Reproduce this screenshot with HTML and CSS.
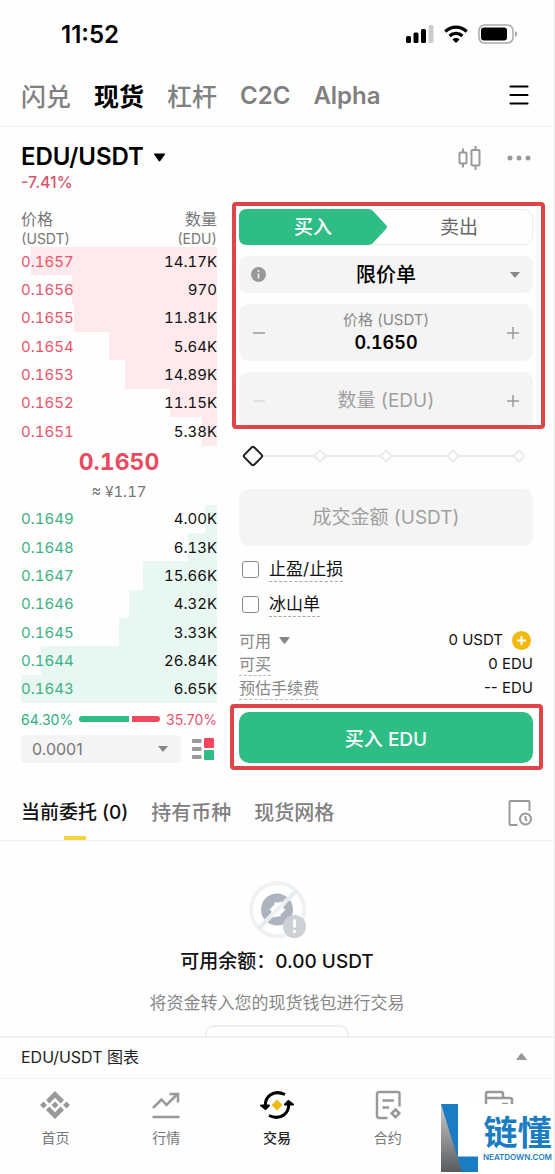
FILE: index.html
```html
<!DOCTYPE html>
<html lang="zh-CN">
<head>
<meta charset="utf-8">
<meta name="viewport" content="width=device-width, initial-scale=1">
<title>EDU/USDT 现货</title>
<link rel="stylesheet" href="styles.css">
</head>
<body>
<div class="app">
  <div class="status">
    <span class="clock">11:52</span>
    <div class="status-icons">
      <svg width="28" height="18" viewBox="0 0 28 18"><rect x="0" y="11" width="5" height="7" rx="1.5"/><rect x="7.500" y="7.500" width="5" height="10.500" rx="1.500"/><rect x="15" y="4" width="5" height="14" rx="1.500"/><rect x="22.500" y="0" width="5" height="18" rx="1.500" fill="#ccc"/></svg>
      <svg width="24" height="18" viewBox="0 0 24 18" fill="none" stroke="#000" stroke-width="3.200"><path d="M1.300 6.500a15.500 15.500 0 0 1 21.400 0"/><path d="M5.600 11a9.300 9.300 0 0 1 12.800 0"/><path d="M12 18l-3.500-3.600a5 5 0 0 1 7 0z" fill="#000" stroke="none"/></svg>
      <svg width="40" height="20" viewBox="0 0 40 20"><rect x="1" y="1" width="34" height="18" rx="5.500" fill="#fff" stroke="#aaa" stroke-width="1.500"/><rect x="3" y="3.500" width="26" height="13" rx="3"/><path d="M37 7c3 1 3 5 0 6z" fill="#aaa"/></svg>
    </div>
  </div>

  <nav class="markets">
    <a href="#">闪兑</a><a href="#" class="on">现货</a><a href="#">杠杆</a><a href="#">C2C</a><a href="#">Alpha</a>
    <button class="icon-btn" aria-label="菜单"><svg width="20" height="20" viewBox="0 0 20 20" stroke="#000" stroke-width="2.200" stroke-linecap="round"><path d="M1.500 1.500h17M1.500 10h17M1.500 18.500h17"/></svg></button>
  </nav>

  <header class="pair">
    <div>
      <button class="pair-name">EDU/USDT <svg width="13" height="9" viewBox="0 0 13 9"><path d="M1.500.5h10q1 0 .4.900L7.300 8q-.8.900-1.600 0L1.100 1.400q-.6-.9.400-.9z"/></svg></button>
      <div class="change">-7.41%</div>
    </div>
    <div class="pair-tools">
      <button class="icon-btn" aria-label="K线"><svg width="23" height="24" viewBox="0 0 23 24" fill="none" stroke="#999" stroke-width="2"><rect x="1.500" y="6.500" width="7" height="11" rx="1"/><path d="M5 2.500v4M5 17.500v4"/><rect x="13.500" y="4" width="8" height="15.500" rx="1"/><path d="M17.500 0v4M17.500 19.500V24"/></svg></button>
      <button class="icon-btn" aria-label="更多"><svg width="24" height="24" viewBox="0 0 24 24" fill="#999"><circle cx="3" cy="12" r="2.500"/><circle cx="12" cy="12" r="2.500"/><circle cx="21" cy="12" r="2.500"/></svg></button>
    </div>
  </header>

  <main class="trade">
    <section class="book-col">
      <table class="book">
        <thead><tr><th>价格<small>(USDT)</small></th><th>数量<small>(EDU)</small></th></tr></thead>
        <tbody class="asks">
          <tr style="--depth:95%"><td>0.1657</td><td>14.17K</td></tr>
          <tr style="--depth:74%"><td>0.1656</td><td>970</td></tr>
          <tr style="--depth:73%"><td>0.1655</td><td>11.81K</td></tr>
          <tr style="--depth:55%"><td>0.1654</td><td>5.64K</td></tr>
          <tr style="--depth:47%"><td>0.1653</td><td>14.89K</td></tr>
          <tr style="--depth:24%"><td>0.1652</td><td>11.15K</td></tr>
          <tr style="--depth:7.500%"><td>0.1651</td><td>5.38K</td></tr>
        </tbody>
        <tbody class="last"><tr><td colspan="2"><strong>0.1650</strong><span>≈ ¥1.17</span></td></tr></tbody>
        <tbody class="bids">
          <tr style="--depth:6%"><td>0.1649</td><td>4.00K</td></tr>
          <tr style="--depth:15%"><td>0.1648</td><td>6.13K</td></tr>
          <tr style="--depth:38%"><td>0.1647</td><td>15.66K</td></tr>
          <tr style="--depth:45%"><td>0.1646</td><td>4.32K</td></tr>
          <tr style="--depth:50%"><td>0.1645</td><td>3.33K</td></tr>
          <tr style="--depth:90%"><td>0.1644</td><td>26.84K</td></tr>
          <tr style="--depth:100%"><td>0.1643</td><td>6.65K</td></tr>
        </tbody>
      </table>
      <div class="ratio"><span class="up">64.30%</span><i class="bar bar-up" style="flex-grow:64"></i><i class="bar bar-down" style="flex-grow:36"></i><span class="down">35.70%</span></div>
      <div class="book-foot">
        <select class="step" aria-label="价格精度"><option>0.0001</option></select>
        <button class="icon-btn" aria-label="盘口布局"><svg width="22" height="22" viewBox="0 0 22 22"><g fill="#999"><rect x="0" y="1" width="9.500" height="4" rx=".8"/><rect x="0" y="9" width="9.500" height="4" rx=".8"/><rect x="0" y="17" width="9.500" height="4" rx=".8"/></g><rect x="12" y="0" width="10" height="10" rx="1" fill="#f6465d"/><rect x="12" y="12" width="10" height="10" rx="1" fill="#2ebd85"/></svg></button>
      </div>
    </section>

    <section class="form">
      <div class="marked marked-order">
        <div class="sides">
          <button class="buy"><svg viewBox="0 0 148 36" preserveAspectRatio="none" aria-hidden="true"><path d="M8 0h121q3 0 5 2l13 14q2 2 0 4l-13 14q-2 2-5 2H8q-8 0-8-8V8q0-8 8-8z" fill="#2ebd85"/></svg><span>买入</span></button>
          <button class="sell">卖出</button>
        </div>
        <div class="type">
          <svg class="info" width="15" height="15" viewBox="0 0 15 15"><circle cx="7.500" cy="7.500" r="7.500" fill="#999"/><path d="M7.500 6.500v5M7.500 3.200v1.800" stroke="#f4f4f4" stroke-width="1.600" fill="none"/></svg>
          <select aria-label="订单类型"><option>限价单</option></select>
        </div>
        <div class="stepper">
          <button aria-label="减少价格"><svg width="14" height="14" viewBox="0 0 14 14"><path d="M1 7h12"/></svg></button>
          <div class="value"><label for="price">价格 (USDT)</label><input id="price" value="0.1650"></div>
          <button aria-label="增加价格"><svg width="14" height="14" viewBox="0 0 14 14"><path d="M1 7h12M7 1v12"/></svg></button>
        </div>
        <div class="stepper">
          <button disabled aria-label="减少数量"><svg width="14" height="14" viewBox="0 0 14 14"><path d="M1 7h12"/></svg></button>
          <div class="value"><input class="empty-input" aria-label="数量" placeholder="数量 (EDU)"></div>
          <button aria-label="增加数量"><svg width="14" height="14" viewBox="0 0 14 14"><path d="M1 7h12M7 1v12"/></svg></button>
        </div>
      </div>
      <div class="slider">
        <div class="stops"><i></i><i></i><i></i><i></i><i></i></div>
        <input type="range" min="0" max="100" value="0" aria-label="数量比例">
      </div>
      <input class="total empty-input" aria-label="成交金额" placeholder="成交金额 (USDT)">
      <div class="checks">
        <label><input type="checkbox"><span>止盈/止损</span></label>
        <label><input type="checkbox"><span>冰山单</span></label>
      </div>
      <div class="facts">
        <div><button class="avail">可用 <svg width="11" height="7" viewBox="0 0 11 7" fill="#888"><path d="M1 0h9q1 0 .4.900L6.200 6.500q-.7.600-1.400 0L.6.900Q0 0 1 0z"/></svg></button><b>0 USDT <svg width="19" height="19" viewBox="0 0 19 19"><circle cx="9.500" cy="9.500" r="9.500" fill="#f0b90b"/><path d="M5 9.500h9M9.500 5v9" stroke="#fff" stroke-width="2"/></svg></b></div>
        <div><span class="hint">可买</span><b>0 EDU</b></div>
        <div><span class="hint">预估手续费</span><b>-- EDU</b></div>
      </div>
      <div class="marked marked-submit"><button class="submit">买入 EDU</button></div>
    </section>
  </main>

  <nav class="orders">
    <a href="#" class="on">当前委托 (0)</a><a href="#">持有币种</a><a href="#">现货网格</a>
    <button class="icon-btn" aria-label="历史"><svg width="24" height="26" viewBox="0 0 24 26" fill="none" stroke="#999" stroke-width="2"><path d="M9.500 25H2.500q-1 0-1-1V2q0-1 1-1h18q1 0 1 1v9"/><circle cx="17.500" cy="19" r="5.500"/><path d="M17.500 16v3l1.500 2"/></svg></button>
  </nav>

  <section class="empty">
    <svg width="57" height="57" viewBox="0 0 57 57"><circle cx="28.500" cy="28.500" r="26.500" fill="#fff" stroke="#eff1f3" stroke-width="4"/><circle cx="28" cy="28.500" r="16" fill="#aeb4bf"/><path d="M9.500 47.500l38-38" stroke="#e9ecef" stroke-width="4.500"/><path d="M20.500 28.500l5-5v-2h4l2-1 3 3v4l2 1-5 5v2h-4l-2 1-3-3v-3z" fill="#fff"/><path d="M22 35l13-13" stroke="#eff1f3" stroke-width="4.500"/><circle cx="45.500" cy="45.500" r="11.500" fill="#cdd1d5"/><path d="M45.500 38.500v8M45.500 49v3" stroke="#fff" stroke-width="3"/></svg>
    <h2>可用余额：0.00 USDT</h2>
    <p>将资金转入您的现货钱包进行交易</p>
    <div class="peek"></div>
  </section>

  <button class="chart">EDU/USDT 图表 <svg width="11" height="7" viewBox="0 0 11 7" fill="#999"><path d="M1 7h9q1 0 .4-.9L6.200.5q-.7-.6-1.400 0L.6 6.100Q0 7 1 7z"/></svg></button>

  <div class="bottom">
    <nav class="tabs">
      <a href="#"><svg width="30" height="30" viewBox="0 0 30 30" fill="#999"><path d="M15 1l9 9-3.400 3.400L15 7.800l-5.600 5.600L6 10zM15 29l9-9-3.400-3.400L15 22.200l-5.600-5.600L6 20zM15 11.500l3.500 3.500-3.500 3.500-3.500-3.500zM3.500 11.500L7 15l-3.500 3.500L0 15zM26.500 11.500L30 15l-3.500 3.500L23 15z"/></svg>首页</a>
      <a href="#"><svg width="30" height="30" viewBox="0 0 30 30" fill="none" stroke="#999" stroke-width="2.500"><path d="M2 18l8.500-8.500 5 5.500L26 4.500M18.500 4H27v8.500M1.500 27h27"/></svg>行情</a>
      <a href="#" class="on"><svg width="34" height="30" viewBox="0 0 34 30" fill="none" stroke="#000" stroke-width="3"><path d="M5.500 18C4 7 13-1 25 4.500M28.500 12C30 23 21 31 9 25.500"/><path d="M1 15.500h8l-3.500 3.500zM25 14.500h8L28.500 11z" fill="#000" stroke-width="2" stroke-linejoin="round"/><path d="M17 9.500l5.500 5.500-5.500 5.500-5.500-5.500z" fill="#f0b90b" stroke="none"/></svg>交易</a>
      <a href="#"><svg width="30" height="30" viewBox="0 0 30 30" fill="none" stroke="#999" stroke-width="2.400"><path d="M14.500 28H6q-2 0-2-2V4q0-2 2-2h19q1.500 0 1.500 2v12.500M9.500 10.500H21M9.500 17.500H16"/><path d="M22.500 19.500l3.800 3.800-3.800 3.800-3.800-3.800z" stroke-width="2.600"/></svg>合约</a>
      <a href="#" aria-label="资金"><svg width="30" height="30" viewBox="0 0 30 30" fill="none" stroke="#999" stroke-width="2.500"><path d="M2 26V4q0-2 2-2h13q2 0 2 2v4M2 8h24q2 0 2 2v16q0 2-2 2H4q-2 0-2-2M18 14h6"/></svg></a>
    </nav>
    <div class="brand">
      <svg width="37" height="68" viewBox="0 0 37 68"><defs><linearGradient id="steel" x1="0" y1="0" x2="0" y2="1"><stop offset="0" stop-color="#ccc"/><stop offset="1" stop-color="#585b5d"/></linearGradient></defs><path d="M0 0h17v52.500h20V68H0z" fill="#1a7dc4"/><path d="M0 0l21 68H0z" fill="url(#steel)"/></svg>
      <div class="brand-text"><strong>链懂</strong><small>NEATDOWN.COM</small></div>
    </div>
  </div>
</div>
</body>
</html>
```
FILE: styles.css
```css
* { box-sizing: border-box; }
body { margin: 0; background: #fefefe; }
body, button, input, select { font-family: Inter, "Noto Sans CJK SC", sans-serif; }
button { border: 0; padding: 0; background: none; color: inherit; cursor: pointer; }
input, select { border: 0; padding: 0; outline: 0; background: none; min-width: 0; }
a { color: inherit; text-decoration: none; }
svg { display: block; flex: none; }
.icon-btn { display: flex; align-items: center; }

.app { min-height: 100vh; border-right: 1px solid #ececec; color: #111; overflow: hidden; }

.status { display: flex; justify-content: space-between; align-items: center; height: 68px; padding: 0 36px 0 61px; }
.clock { font-size: 24px; font-weight: 600; color: #000; }
.status-icons { display: flex; align-items: center; gap: 10px; }

.markets { display: flex; align-items: center; gap: 23px; height: 59px; padding: 0 25px 4px 21px; border-bottom: 1px solid #f0f0f0; font-size: 25px; font-weight: 500; color: #808080; }
.markets a:nth-child(n+4) { font-size: 24px; font-weight: 600; }
.markets .on { font-weight: 700; color: #000; }
.markets .icon-btn { margin-left: auto; }

.pair { display: flex; justify-content: space-between; padding: 15px 23px 17px 21px; }
.pair-name { display: flex; align-items: center; gap: 9px; font-size: 24px; line-height: 30px; font-weight: 600; color: #000; }
.change { font-size: 16px; line-height: 20px; font-weight: 500; color: #d9546a; }
.pair-tools { display: flex; height: 32px; align-items: center; gap: 26px; }

.trade { display: grid; grid-template-columns: 2fr 3fr; gap: 22px; padding: 0 21px; }
.book-col { display: flex; flex-direction: column; min-width: 0; }
.book { display: flex; flex-direction: column; flex: 1; font-size: 15px; font-variant-numeric: tabular-nums; }
.book tr { display: flex; justify-content: space-between; align-items: center; }
.book th, .book td { padding: 0; }
.book thead { margin-bottom: -2px; font-size: 16px; line-height: 20px; color: #777; }
.book th { font-weight: 400; text-align: left; }
.book th small { display: block; font-size: 14px; }
.book th:last-child { text-align: right; }
.asks, .bids { display: flex; flex-direction: column; flex: 1; }
.asks tr, .bids tr { flex: 1; }
.asks tr { background: linear-gradient(to left, #feeaed var(--depth), transparent 0); }
.bids tr { background: linear-gradient(to left, #e9f7f2 var(--depth), transparent 0); }
.asks td:first-child { color: #e8546a; }
.bids td:first-child { color: #3db183; }
.last tr { justify-content: center; }
.last td { text-align: center; }
.last strong { display: block; font-size: 23px; line-height: 32px; font-weight: 700; color: #ea4a60; }
.last span { display: block; font-size: 15px; line-height: 27px; color: #777; }

.ratio { display: flex; align-items: center; height: 32px; font-size: 14px; }
.bar { height: 6px; }
.bar-up { margin-left: 6px; margin-right: 3px; border-radius: 3px 0 0 3px; background: #2ebd85; }
.bar-down { margin-right: 6px; border-radius: 0 3px 3px 0; background: #f04a60; }
.up { color: #2fae7c; }
.down { color: #e8546a; }

.book-foot { display: flex; align-items: center; gap: 11px; padding-right: 3px; }
.step, .type select { appearance: none; background: #f4f4f4 url("data:image/svg+xml,%3Csvg xmlns='http://www.w3.org/2000/svg' width='10' height='6'%3E%3Cpath d='M0 0h10L5 6z' fill='%23888'/%3E%3C/svg%3E") no-repeat right 13px center; }
.step { flex: 1; height: 28px; padding-left: 11px; border-radius: 4px; font-size: 16px; color: #777; }

.form { display: flex; flex-direction: column; min-width: 0; }
.marked { position: relative; }
.marked::after { content: ""; position: absolute; border: 4px solid #df4548; border-radius: 4px; pointer-events: none; }
.marked-order { display: flex; flex-direction: column; gap: 11px; }
.marked-order::after { inset: -7px -12px 0 -7px; }
.marked-submit::after { inset: -8px -10px -7px -9px; }

.sides { display: flex; height: 36px; border: 1px solid #ececec; border-radius: 9px; font-size: 19px; }
.sides button { flex: 1; font-size: 19px; line-height: 36px; }
.buy { position: relative; color: #fff; font-weight: 500; }
.buy svg { position: absolute; top: -1px; left: -1px; width: 148px; height: 36px; }
.buy span { position: relative; }
.sell { color: #666; }

.type { position: relative; display: flex; }
.type select { flex: 1; height: 37px; border-radius: 9px; font-size: 20px; font-weight: 500; color: #000; text-align: center; text-align-last: center; padding: 0 24px; }
.info { position: absolute; left: 12px; top: 11px; }

.stepper { display: flex; align-items: center; height: 57px; padding: 0 13px; border-radius: 10px; background: #f4f4f4; }
.stepper svg { fill: none; stroke: #999; stroke-width: 1.500; }
.stepper button:disabled svg { stroke: #ddd; }
.value { flex: 1; display: flex; flex-direction: column; align-items: center; min-width: 0; }
.value label { font-size: 15px; line-height: 20px; color: #888; }
.value input { width: 100%; height: 26px; text-align: center; font-size: 18px; font-weight: 600; font-variant-numeric: tabular-nums; color: #000; }
.value .empty-input { font-weight: 400; }
.empty-input::placeholder { color: #a0a0a0; opacity: 1; }
.empty-input, .value .empty-input { text-align: center; font-size: 19px; }
.total { height: 57px; border-radius: 10px; background: #f4f4f4; }

.slider { position: relative; display: flex; align-items: center; height: 54px; margin-bottom: 6px; padding: 0 9px; }
.stops { flex: 1; display: flex; justify-content: space-between; background: linear-gradient(#ebebeb, #ebebeb) center / 100% 2px no-repeat; }
.stops i { width: 10px; height: 10px; border: 2px solid #ebebeb; border-radius: 2px; background: #fefefe; transform: rotate(45deg); }
.slider input { position: absolute; inset: 0 6px; height: 54px; margin: 0; appearance: none; }
.slider input::-webkit-slider-thumb { appearance: none; width: 16px; height: 16px; border: 2px solid #222; border-radius: 3px; background: #fefefe; transform: rotate(45deg); }

.checks { padding-top: 6px; }
.checks label { display: flex; align-items: center; gap: 10px; height: 35px; padding-left: 3px; font-size: 17px; line-height: 24px; }
.checks input { appearance: none; width: 17px; height: 17px; margin: 0; border: 1px solid #8a8a8a; border-radius: 3px; }
.checks span { border-bottom: 1px dashed #aaa; }

.facts { padding: 6px 0 12px; font-size: 15px; line-height: 22px; }
.facts div { display: flex; justify-content: space-between; align-items: center; height: 24px; color: #888; }
.facts b { display: flex; align-items: center; gap: 9px; font-weight: 400; color: #111; }
.facts div:first-child b { padding-right: 2px; }
.avail { display: flex; align-items: center; gap: 8px; font-size: 16px; }
.hint { border-bottom: 1px dashed #bbb; }
.facts .hint { font-size: 16px; }

.submit { width: 100%; height: 51px; border-radius: 10px; background: #2ebd85; color: #fff; font-size: 19px; font-weight: 500; display: block; }

.orders { display: flex; align-items: center; gap: 23px; height: 55px; margin-top: 23px; padding: 0 22px 0 21px; border-bottom: 1px solid #f0f0f0; font-size: 20px; font-weight: 500; color: #808080; }
.orders a { position: relative; line-height: 54px; }
.orders .on { color: #111; font-size: 19px; }
.orders .on::after { content: ""; position: absolute; left: 50%; bottom: 0; width: 22px; height: 4px; margin-left: -11px; background: #f3d33f; }
.orders .icon-btn { margin-left: auto; }

.empty { display: flex; flex-direction: column; align-items: center; padding-top: 40px; }
.empty h2 { margin: 10px 0 0; font-size: 19px; line-height: 28px; font-weight: 500; }
.empty p { margin: 14px 0 0; font-size: 17px; line-height: 26px; color: #888; }
.peek { width: 144px; height: 11px; margin-top: 9px; border: 2px solid #efefef; border-bottom: 0; border-radius: 9px 9px 0 0; }

.chart { display: flex; align-items: center; justify-content: space-between; width: 100%; height: 43px; padding: 0 27px 4px 21px; border-top: 2px solid #f1f1f1; border-bottom: 1px solid #f3f3f3; font-size: 16px; color: #222; }

.bottom { position: relative; }
.tabs { display: grid; grid-template-columns: repeat(5, 1fr); height: 95px; padding-top: 11px; font-size: 14px; line-height: 20px; color: #777; }
.tabs a { display: flex; flex-direction: column; align-items: center; gap: 8px; }
.tabs .on { color: #222; font-weight: 500; }
.brand { position: absolute; right: 0; bottom: 0; display: flex; gap: 5px; width: 113px; height: 70px; background: #fff; }
.brand-text { display: flex; flex-direction: column; align-items: center; padding-top: 11px; }
.brand strong { font-size: 34px; line-height: 36px; font-weight: 700; color: #1a7dc4; }
.brand small { font-size: 8px; line-height: 12px; font-weight: 600; color: #1a7dc4; }
```
